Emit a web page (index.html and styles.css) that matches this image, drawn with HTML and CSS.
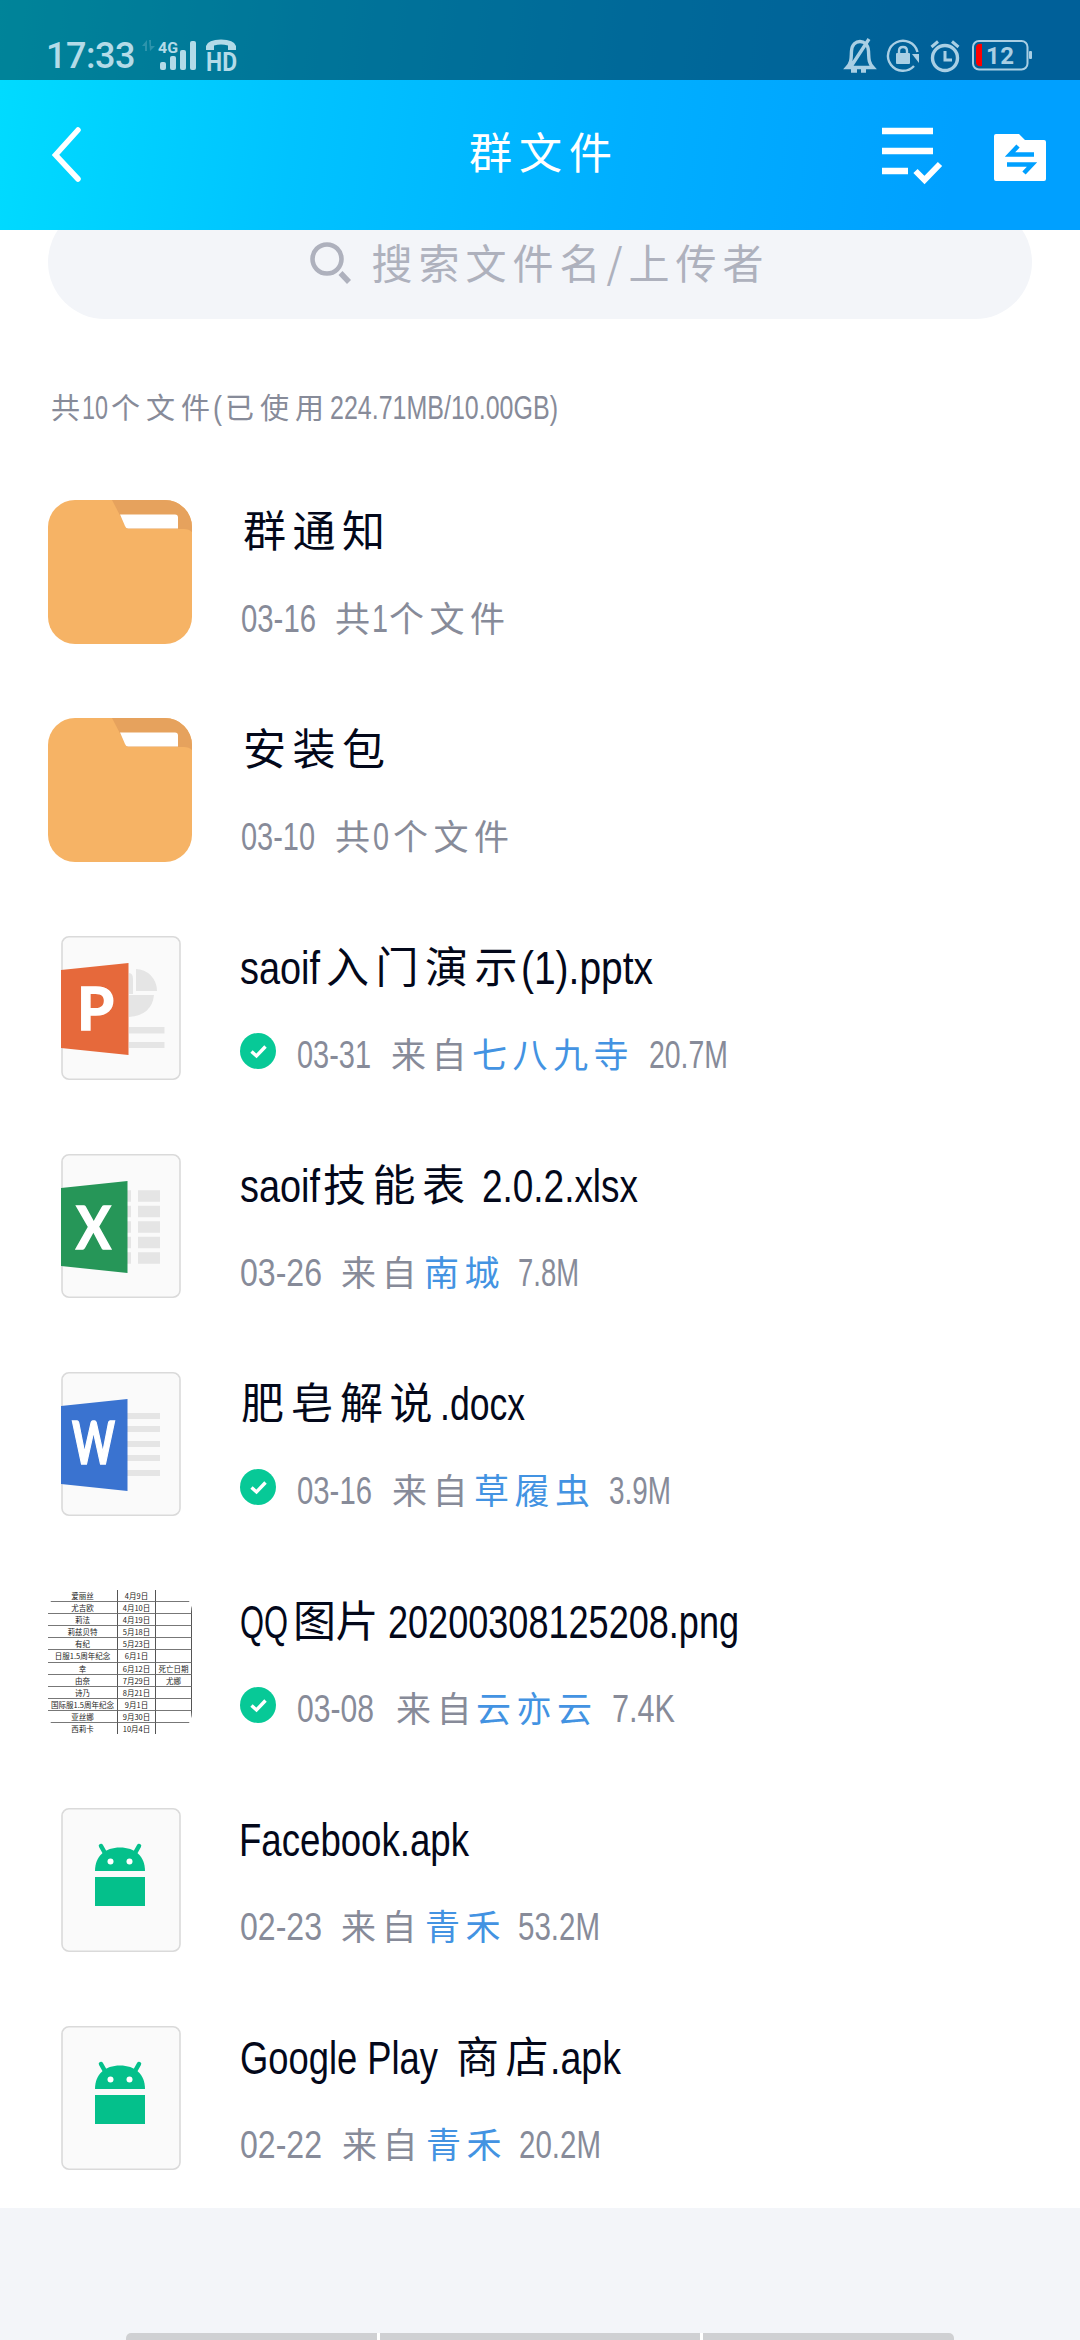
FILE: index.html
```html
<!DOCTYPE html>
<html lang="zh-CN">
<head>
<meta charset="utf-8">
<title>群文件</title>
<link rel="stylesheet" href="styles.css">
</head>
<body>
<svg class="defs" width="0" height="0" aria-hidden="true">
  <symbol id="folder" viewBox="0 0 144 144">
    <rect width="144" height="144" rx="27" fill="#f6b365"/>
    <path d="M64 0H117A27 27 0 0 1 144 27V32Q141 29 136 29H79Z" fill="#e6a25d"/>
    <path d="M72 14.5H127Q130 14.5 130 17.500V28.500H80Q78 28.500 77 26Z" fill="#fff"/>
  </symbol>
  <symbol id="sheet" viewBox="0 0 144 144">
    <rect x="14" y=".8" width="118" height="142.400" rx="7" fill="#fafafa" stroke="#dadada" stroke-width="1.600"/>
  </symbol>
  <symbol id="apk" viewBox="0 0 144 144">
    <use href="#sheet"/>
    <path d="M47 63C47 48 57 39.500 72 39.500S97 48 97 63Z" fill="#04c08b"/>
    <path d="M53 38L57.500 46M91 38L86.500 46" stroke="#04c08b" stroke-width="4.500" stroke-linecap="round"/>
    <circle cx="62.500" cy="53.500" r="3" fill="#fff"/><circle cx="81.500" cy="53.500" r="3" fill="#fff"/>
    <path d="M47 69H97V98H47Z" fill="#04c08b"/>
  </symbol>
  <symbol id="done" viewBox="0 0 36 36">
    <circle cx="18" cy="18" r="18" fill="#07c997"/>
    <path d="M11.500 18.500L16.500 23L25.500 13.500" fill="none" stroke="#fff" stroke-width="3.400"/>
  </symbol>
</svg>

<header class="top">
  <div class="status">
    <div class="status-side">
      <span class="clock">17:33</span>
      <svg width="96" height="34" viewBox="141 38 96 34" fill="#b3dbe8">
        <path d="M142 46L147 40V51H145V46ZM149 40H151V46H155L150 51Z" opacity=".25"/>
        <text x="158" y="52.500" font-size="15" class="net" textLength="20" lengthAdjust="spacingAndGlyphs">4G</text>
        <rect x="160" y="62" width="6" height="8" rx="2"/><rect x="170" y="56" width="6" height="14" rx="2"/><rect x="180" y="50" width="6" height="20" rx="2"/><rect x="190" y="41" width="6" height="29" rx="2"/>
        <path d="M206 50V46Q208 39.500 221 39.500T236 46V50H228V45.500Q221 43.500 214 45.500V50Z"/>
        <text x="206" y="71" font-size="26" class="net" textLength="31" lengthAdjust="spacingAndGlyphs">HD</text>
      </svg>
    </div>
    <svg width="188" height="34" viewBox="845 38 188 34" fill="none" stroke="#a9cfe4" stroke-width="3.400">
      <path d="M847 67.500H873C868 62 869 58 868.500 51C868 44 864 41.500 860 41.500S852 44 851.500 51C851 58 852 62 847 67.500ZM869 39L850 68M851 71H857M861 71H866"/>
      <path d="M917.500 52A15 15 0 1 0 914 66" stroke-width="2.400"/>
      <path d="M912 54L919 63V54Z" fill="#a9cfe4" stroke="none"/>
      <rect x="896" y="53" width="14" height="11" rx="1" fill="#a9cfe4" stroke="none"/>
      <path d="M899 54V51Q899 47 903 47T907 51V54" stroke-width="2.400"/>
      <circle cx="945" cy="58" r="12.500"/>
      <path d="M945 51V60H952M931.500 47L938 41.500M958.500 47L952 41.500" stroke-width="3"/>
      <rect x="973" y="41" width="54.500" height="28.500" rx="6" stroke-width="2"/>
      <path d="M982 44V66Q976 67 976 62V48Q976 43 982 44Z" fill="#f00" stroke="none"/>
      <rect x="1029" y="51" width="3" height="8" rx="1" fill="#a9cfe4" stroke="none"/>
      <text x="986" y="64" font-size="24" class="net" fill="#a9cfe4" stroke="none" textLength="28">12</text>
    </svg>
  </div>
  <div class="nav">
    <svg width="32" height="60" viewBox="50 125 32 60"><path d="M78 130L55.500 155L78 179" fill="none" stroke="#fff" stroke-width="5.500" stroke-linecap="round"/></svg>
    <h1>群文件</h1>
    <svg width="170" height="60" viewBox="880 125 170 60">
      <path d="M882 131H933M882 151H933M882 171H908" stroke="#fff" stroke-width="6.500"/>
      <path d="M915.500 171L924.500 180L940 164" fill="none" stroke="#fff" stroke-width="6"/>
      <path d="M996 134H1019L1025 140H1044Q1046 140 1046 142V179Q1046 181 1044 181H996Q994 181 994 179V136Q994 134 996 134Z" fill="#fff"/>
      <path d="M1034 154.500H1010L1018 146M1007 164.500H1032L1024 173" fill="none" stroke="#00a0ff" stroke-width="4.500"/>
    </svg>
  </div>
</header>

<main>
  <div class="search-clip">
    <div class="search">
      <svg width="40" height="40" viewBox="0 0 40 40" fill="none" stroke="#aeb1bd"><circle cx="17" cy="17" r="14.500" stroke-width="4.600"/><path d="M30.500 31L39 40" stroke-width="5.500"/></svg>
      <span>搜索文件名/上传者</span>
    </div>
  </div>
  <svg class="summary" viewBox="0 0 1080 60">
    <text class="cjk" x="51" y="41">共</text><text class="num" x="82" y="41" textLength="26" lengthAdjust="spacingAndGlyphs">10</text>
    <text class="cjk" x="111" y="41">个文件</text><text class="num" x="213" y="41" textLength="9" lengthAdjust="spacingAndGlyphs">(</text>
    <text class="cjk" x="225" y="41">已使用</text><text class="num" x="330" y="41" textLength="228" lengthAdjust="spacingAndGlyphs">224.71MB/10.00GB)</text>
  </svg>

  <ul class="files">
    <li><svg class="thumb"><use href="#folder"/></svg>
      <div class="info">
        <svg class="name" viewBox="240 0 780 64"><text class="cjk" x="243" y="47">群通知</text></svg>
        <svg class="meta" viewBox="240 0 780 60"><text class="num" x="241" y="43" textLength="75" lengthAdjust="spacingAndGlyphs">03-16</text><text class="cjk" x="335" y="43">共</text><text class="num" x="372" y="43" textLength="16" lengthAdjust="spacingAndGlyphs">1</text><text class="cjk" x="389" y="43">个文件</text></svg>
      </div></li>
    <li><svg class="thumb"><use href="#folder"/></svg>
      <div class="info">
        <svg class="name" viewBox="240 0 780 64"><text class="cjk" x="243" y="47">安装包</text></svg>
        <svg class="meta" viewBox="240 0 780 60"><text class="num" x="241" y="43" textLength="74" lengthAdjust="spacingAndGlyphs">03-10</text><text class="cjk" x="335" y="43">共</text><text class="num" x="373" y="43" textLength="16" lengthAdjust="spacingAndGlyphs">0</text><text class="cjk" x="393" y="43">个文件</text></svg>
      </div></li>
    <li><svg class="thumb" viewBox="0 0 144 144"><use href="#sheet"/>
        <path d="M88 33A21 22 0 0 1 109 55H88ZM81 59H106Q104 79 81 81ZM81 91H116.500V97.500H81ZM81 106H116.500V112H81Z" fill="#e5e5e5"/>
        <path d="M81 37Q85 37 85 43V58H81Z" fill="#e5e5e5"/>
        <path d="M13 34L80.500 27V119L13 112Z" fill="#e6693b"/>
        <text class="letter" x="29" y="94" textLength="37" lengthAdjust="spacingAndGlyphs">P</text></svg>
      <div class="info">
        <svg class="name" viewBox="240 0 780 64"><text class="num" x="240" y="48" textLength="80" lengthAdjust="spacingAndGlyphs">saoif</text><text class="cjk" x="326" y="47">入门演示</text><text class="num" x="521" y="48" textLength="132" lengthAdjust="spacingAndGlyphs">(1).pptx</text></svg>
        <svg class="meta" viewBox="240 0 780 60"><use href="#done" x="240" y="8" width="36" height="36"/><text class="num" x="297" y="43" textLength="74" lengthAdjust="spacingAndGlyphs">03-31</text><text class="cjk" x="391" y="43">来自</text><text class="cjk user" x="472" y="43">七八九寺</text><text class="num" x="649" y="43" textLength="79" lengthAdjust="spacingAndGlyphs">20.7M</text></svg>
      </div></li>
    <li><svg class="thumb" viewBox="0 0 144 144"><use href="#sheet"/>
        <path d="M79 42H83M90 42H112M79 57.500H83M90 57.500H112M79 73H83M90 73H112M79 88.500H83M90 88.500H112M79 104H83M90 104H112" stroke="#e5e5e5" stroke-width="11.500"/>
        <path d="M13 34L79.500 27V119L13 112Z" fill="#269658"/>
        <text class="letter" x="28" y="95" textLength="35" lengthAdjust="spacingAndGlyphs">X</text></svg>
      <div class="info">
        <svg class="name" viewBox="240 0 780 64"><text class="num" x="240" y="48" textLength="80" lengthAdjust="spacingAndGlyphs">saoif</text><text class="cjk" x="323" y="47">技能表</text><text class="num" x="482" y="48" textLength="156" lengthAdjust="spacingAndGlyphs">2.0.2.xlsx</text></svg>
        <svg class="meta" viewBox="240 0 780 60"><text class="num" x="240" y="43" textLength="82" lengthAdjust="spacingAndGlyphs">03-26</text><text class="cjk" x="341" y="43">来自</text><text class="cjk user" x="424" y="43">南城</text><text class="num" x="518" y="43" textLength="61" lengthAdjust="spacingAndGlyphs">7.8M</text></svg>
      </div></li>
    <li><svg class="thumb" viewBox="0 0 144 144"><use href="#sheet"/>
        <path d="M79 44H112M79 57H112M79 72H112M79 86H112M79 101H112" stroke="#e5e5e5" stroke-width="6"/>
        <path d="M13 34L79.500 27V119L13 112Z" fill="#3a73d0"/>
        <text class="letter" x="24" y="92" textLength="43" lengthAdjust="spacingAndGlyphs">W</text></svg>
      <div class="info">
        <svg class="name" viewBox="240 0 780 64"><text class="cjk" x="241" y="47">肥皂解说</text><text class="num" x="440" y="48" textLength="85" lengthAdjust="spacingAndGlyphs">.docx</text></svg>
        <svg class="meta" viewBox="240 0 780 60"><use href="#done" x="240" y="8" width="36" height="36"/><text class="num" x="297" y="43" textLength="75" lengthAdjust="spacingAndGlyphs">03-16</text><text class="cjk" x="392" y="43">来自</text><text class="cjk user" x="474" y="43">草履虫</text><text class="num" x="609" y="43" textLength="62" lengthAdjust="spacingAndGlyphs">3.9M</text></svg>
      </div></li>
    <li><div class="thumb table">
        <span>爱丽丝</span><span>4月9日</span><span></span>
        <span>尤吉欧</span><span>4月10日</span><span></span>
        <span>莉法</span><span>4月19日</span><span></span>
        <span>莉兹贝特</span><span>5月18日</span><span></span>
        <span>有纪</span><span>5月23日</span><span></span>
        <span>日服1.5周年纪念</span><span>6月1日</span><span></span>
        <span>幸</span><span>6月12日</span><span>死亡日期</span>
        <span>由奈</span><span>7月29日</span><span>尤娜</span>
        <span>诗乃</span><span>8月21日</span><span></span>
        <span>国际服1.5周年纪念</span><span>9月1日</span><span></span>
        <span>亚丝娜</span><span>9月30日</span><span></span>
        <span>西莉卡</span><span>10月4日</span><span></span></div>
      <div class="info">
        <svg class="name" viewBox="240 0 780 64"><text class="num" x="240" y="48" textLength="48" lengthAdjust="spacingAndGlyphs">QQ</text><text class="cjk" x="293" y="47" textLength="92">图片</text><text class="num" x="388" y="48" textLength="351" lengthAdjust="spacingAndGlyphs">20200308125208.png</text></svg>
        <svg class="meta" viewBox="240 0 780 60"><use href="#done" x="240" y="8" width="36" height="36"/><text class="num" x="297" y="43" textLength="77" lengthAdjust="spacingAndGlyphs">03-08</text><text class="cjk" x="396" y="43">来自</text><text class="cjk user" x="476" y="43">云亦云</text><text class="num" x="612" y="43" textLength="63" lengthAdjust="spacingAndGlyphs">7.4K</text></svg>
      </div></li>
    <li><svg class="thumb"><use href="#apk"/></svg>
      <div class="info">
        <svg class="name" viewBox="240 0 780 64"><text class="num" x="239" y="48" textLength="230" lengthAdjust="spacingAndGlyphs">Facebook.apk</text></svg>
        <svg class="meta" viewBox="240 0 780 60"><text class="num" x="240" y="43" textLength="82" lengthAdjust="spacingAndGlyphs">02-23</text><text class="cjk" x="341" y="43">来自</text><text class="cjk user" x="425" y="43">青禾</text><text class="num" x="518" y="43" textLength="82" lengthAdjust="spacingAndGlyphs">53.2M</text></svg>
      </div></li>
    <li><svg class="thumb"><use href="#apk"/></svg>
      <div class="info">
        <svg class="name" viewBox="240 0 780 64"><text class="num" x="240" y="48" textLength="198" lengthAdjust="spacingAndGlyphs">Google Play</text><text class="cjk" x="456" y="47">商店</text><text class="num" x="550" y="48" textLength="71" lengthAdjust="spacingAndGlyphs">.apk</text></svg>
        <svg class="meta" viewBox="240 0 780 60"><text class="num" x="240" y="43" textLength="82" lengthAdjust="spacingAndGlyphs">02-22</text><text class="cjk" x="342" y="43">来自</text><text class="cjk user" x="426" y="43">青禾</text><text class="num" x="519" y="43" textLength="82" lengthAdjust="spacingAndGlyphs">20.2M</text></svg>
      </div></li>
  </ul>
</main>
<footer><div class="gesture"><span></span><span></span><span></span></div></footer>
</body>
</html>
```
FILE: styles.css
```css
* { box-sizing: border-box; margin: 0; padding: 0; }
body {
  width: 1080px; height: 2340px; overflow: hidden;
  display: flex; flex-direction: column;
  background: #f3f5f9;
  font-family: "Noto Sans CJK SC", sans-serif;
}
svg { display: block; flex: none; overflow: visible; }
.defs { position: absolute; }

.top { height: 230px; flex: none; background: linear-gradient(98deg, #00dcff 0%, #00c3ff 28%, #00afff 58%, #00a0ff 88%); }
.status {
  height: 80px; padding: 38px 47px 0 46px;
  display: flex; justify-content: space-between; align-items: flex-start;
  background: rgba(0, 0, 0, .4);
}
.status-side { display: flex; align-items: flex-start; gap: 5px; }
.clock { width: 90px; font: 500 36px/36px Roboto, sans-serif; letter-spacing: -.5px; color: #b3dbe8; }
.net { font-family: Roboto, sans-serif; font-weight: 700; }
.nav { height: 150px; padding: 0 30px 0 50px; display: grid; grid-template-columns: 170px 1fr 170px; align-items: center; }
.nav h1 { font-size: 43px; font-weight: 400; line-height: 60px; letter-spacing: 7px; text-align: center; color: #fff; margin: -10px 0 0 -12px; }

main { flex: none; height: 1978px; background: #fff; }
.search-clip { height: 89px; overflow: hidden; padding: 0 48px; }
.search {
  height: 114px; margin-top: -25px; border-radius: 57px; background: #f3f5f9;
  display: flex; align-items: center; justify-content: center; gap: 21px;
  font-size: 41px; letter-spacing: 6px; color: #aeb1bd;
}
.search span { margin-top: -3px; }

/* Latin runs are condensed to the handwriting font's advance widths */
.cjk { font-family: "Noto Sans CJK SC", sans-serif; }
.num { font-family: "Liberation Sans", sans-serif; }

.summary { width: 1080px; height: 60px; margin: 59px 0 26px; font-size: 29px; letter-spacing: 6px; fill: #878b99; }
.summary .num { font-size: 33px; letter-spacing: 0; }

.files { list-style: none; }
.files li { height: 218px; padding: 36px 48px 0; display: flex; gap: 48px; }
.thumb { width: 144px; height: 144px; flex: none; }
.letter { font: 700 59px Lato, sans-serif; fill: #fff; stroke: #fff; stroke-width: 1.5px; }
.info { display: flex; flex-direction: column; gap: 25px; }
.name { width: 780px; height: 64px; font-size: 43px; letter-spacing: 6.5px; fill: #03081a; }
.name .num { font-size: 46px; letter-spacing: 0; }
.meta { width: 780px; height: 60px; font-size: 35px; letter-spacing: 5.5px; fill: #878b99; }
.meta .num { font-size: 38px; letter-spacing: 0; }
.meta .user { fill: #4393e2; }

.table {
  display: grid; grid-template-columns: 70px 38px 36px; grid-auto-rows: 12.1px;
  border-radius: 22px; overflow: hidden; font-size: 7.5px; line-height: 11px; color: #222;
}
.table span { border-right: 1px solid #555; border-bottom: 1px solid #777; text-align: center; white-space: nowrap; }

footer { flex: 1; display: flex; align-items: flex-end; justify-content: center; }
.gesture { width: 828px; height: 7px; display: grid; grid-template-columns: 251px 1fr 251px; gap: 3px; background: #fff; border-radius: 5px 5px 0 0; overflow: hidden; }
.gesture span { background: #cfd0d3; }
```
